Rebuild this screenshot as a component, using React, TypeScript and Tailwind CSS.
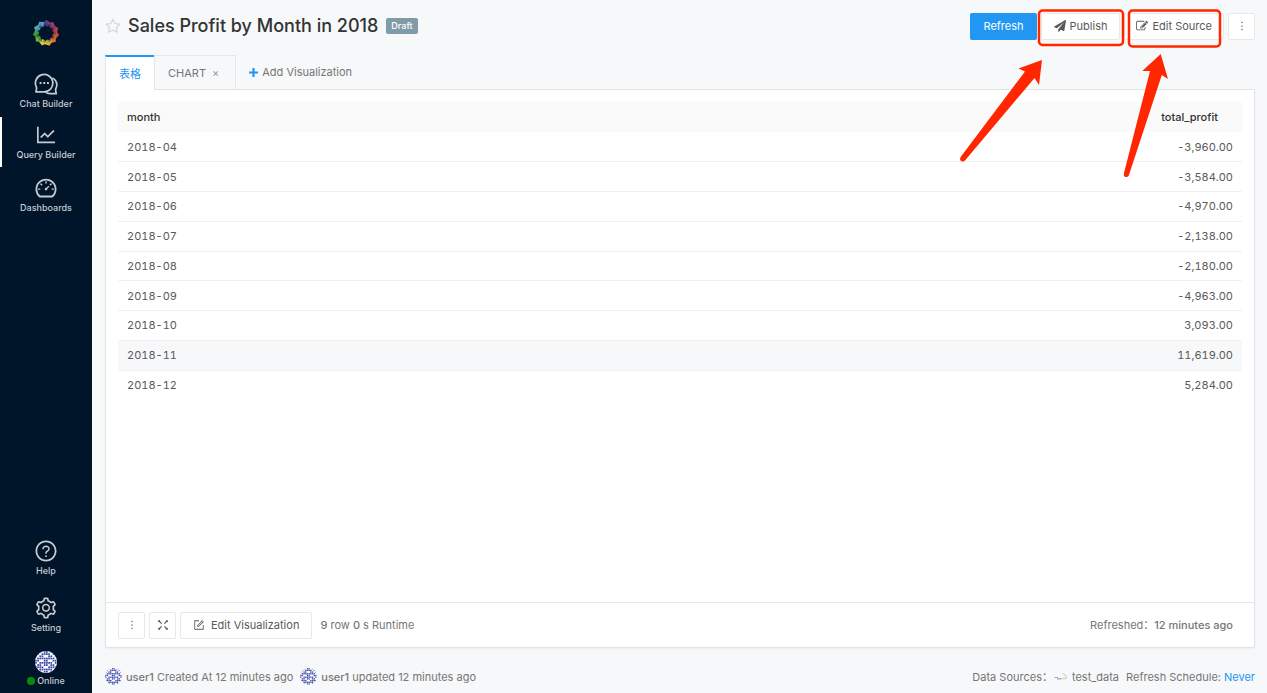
import React from "react";
import {
  AiOutlineDashboard,
  AiOutlineForm,
  AiOutlineLineChart,
  AiOutlineQuestionCircle,
  AiOutlineSetting,
} from "react-icons/ai";

const rows = [
  { month: "2018-04", profit: "-3,960.00" },
  { month: "2018-05", profit: "-3,584.00" },
  { month: "2018-06", profit: "-4,970.00" },
  { month: "2018-07", profit: "-2,138.00" },
  { month: "2018-08", profit: "-2,180.00" },
  { month: "2018-09", profit: "-4,963.00" },
  { month: "2018-10", profit: "3,093.00" },
  { month: "2018-11", profit: "11,619.00", active: true },
  { month: "2018-12", profit: "5,284.00" },
];

const petals = [
  "#5a4a95", "#94467f", "#c5405f", "#e8503f", "#ee7a35",
  "#f3c040", "#e6e44a", "#7cbc3c", "#3fa83c", "#5cc0b0", "#5fa5dc",
];

function Logo() {
  return (
    <svg viewBox="-14 -14 28 28" className="size-7" aria-hidden="true">
      {petals.map((color, i) => (
        <g key={color} transform={`rotate(${(i * 360) / petals.length})`}>
          <path d="M0.200 -13.200 L4.300 -10.400 L1.400 -6.600 L-4.600 -8.600 Z" fill={color} fillOpacity="0.9" />
          <path d="M-4.600 -8.600 L-0.500 -10 L1.400 -6.600 Z" fill="#001529" fillOpacity="0.35" />
        </g>
      ))}
    </svg>
  );
}

function ChatIcon() {
  return (
    <svg viewBox="0 0 24 22" className="h-[22px] w-6" fill="none" stroke="currentColor" strokeWidth="1.7" strokeLinejoin="round" aria-hidden="true">
      <path d="M1.900 18.800H10.200a8.700 8.700 0 1 0-7.800-4.700c.5 1.400 0 2.900-.5 4.700Z" />
      <path d="M18.500 5c3 1.500 4.300 4.200 4.300 7 0 1.500-.4 2.800-1.100 4-.3 1.500.2 3 .6 4.700H16c-2 0-3.600-.8-4.700-2" />
      <path d="M5.600 10h1.900M9.300 10h1.900M13 10h1.900" strokeWidth="1.900" />
    </svg>
  );
}

function Identicon({ className }: { className: string }) {
  const pattern = ["0110110110", "1101111011", "1011001101", "0111111110", "1100110011", "1011111101", "0110110110", "1111001111", "1011111101", "0110110110"];
  return (
    <svg viewBox="0 0 20 20" className={className + " rounded-full bg-white"} aria-hidden="true">
      {pattern.flatMap((line, y) =>
        line.split("").map((cell, x) =>
          cell === "1" ? <rect key={`${x}-${y}`} x={x * 2} y={y * 2} width="1.6" height="1.6" fill="#3d4aa8" /> : null,
        ),
      )}
    </svg>
  );
}

function PaperPlane() {
  return (
    <svg viewBox="0 0 1792 1792" className="size-3" fill="currentColor" aria-hidden="true">
      <path d="M1764 11q33 24 27 64l-256 1536q-5 29-32 45-14 8-31 8-11 0-24-5l-453-185-242 295q-18 23-49 23-13 0-22-4-19-7-30.500-23.500t-11.500-36.500v-349l864-1059-1069 925-395-162q-37-14-40-55-2-40 32-59l1664-960q15-9 32-9 20 0 36 11z" />
    </svg>
  );
}

function PencilSquare() {
  return (
    <svg viewBox="0 0 1792 1792" className="size-3" fill="currentColor" aria-hidden="true">
      <path d="M888 1184l116-116-152-152-116 116v56h96v96h56zm440-720q-16-16-33 1l-350 350q-17 17-1 33t33-1l350-350q17-17 1-33zm80 594v190q0 119-84.500 203.500t-203.500 84.500h-832q-119 0-203.500-84.500t-84.500-203.500v-832q0-119 84.500-203.500t203.500-84.500h832q63 0 117 25 15 7 18 23 3 17-9 29l-49 49q-14 14-32 8-23-6-45-6h-832q-66 0-113 47t-47 113v832q0 66 47 113t113 47h832q66 0 113-47t47-113v-126q0-13 9-22l64-64q15-15 35-7t20 29zm-96-738l288 288-672 672h-288v-288zm444 132l-92 92-288-288 92-92q28-28 68-28t68 28l152 152q28 28 28 68t-28 68z" />
    </svg>
  );
}

function Dots() {
  return (
    <svg viewBox="0 0 12 12" className="size-3" fill="currentColor" aria-hidden="true">
      <circle cx="6" cy="2.500" r="0.7" />
      <circle cx="6" cy="6" r="0.7" />
      <circle cx="6" cy="9.500" r="0.7" />
    </svg>
  );
}

function ExpandIcon() {
  return (
    <svg viewBox="0 0 12 12" className="size-3" stroke="currentColor" fill="currentColor" strokeWidth="1.200" aria-hidden="true">
      <path d="M2 2l2.600 2.600M10 2L7.400 4.600M2 10l2.600-2.600M10 10L7.400 7.400" />
      <path d="M1.200 1.200h2.300L1.200 3.500zM10.800 1.200v2.300L8.500 1.200zM1.200 10.800V8.500l2.300 2.300zM10.800 10.800H8.500l2.300-2.300z" stroke="none" />
    </svg>
  );
}

function StarIcon() {
  return (
    <svg viewBox="0 0 16 16" className="size-4" fill="none" stroke="#d4d6d8" strokeWidth="1.200" strokeLinejoin="round" aria-hidden="true">
      <path d="M8 1.200l2.100 4.400 4.800.6-3.500 3.300.9 4.800L8 12l-4.300 2.300.9-4.800L1.100 6.200l4.800-.6z" />
    </svg>
  );
}

function DatabaseIcon() {
  return (
    <svg viewBox="0 0 14 10" className="ml-px h-[10px] w-[14px]" fill="none" aria-hidden="true">
      <path d="M.5 5.500h3.500M3 6.800h4" stroke="#7fadc5" strokeWidth="1.200" />
      <path d="M8.500 1.500c1.800.2 2.500 1 3 2.500l1.500 2" stroke="#a9cbdc" strokeWidth="1" />
      <path d="M7 6.500h5.500" stroke="#f3cfa0" strokeWidth="1.500" />
    </svg>
  );
}

function NavItem({ icon, label, active, className }: { icon: React.ReactNode; label: string; active?: boolean; className: string }) {
  return (
    <a
      href="#"
      aria-current={active ? "page" : undefined}
      className={`flex w-full flex-col items-center border-l-2 pr-0.5 text-[9px] font-medium leading-3 text-[#c5cbd1] ${active ? "border-white" : "border-transparent"} ${className}`}
    >
      {icon}
      <span>{label}</span>
    </a>
  );
}

const plainButton = "flex h-[27px] items-center justify-center rounded-[2px] border border-[#e8e8e8] bg-white text-[#595959]";

export default function App() {
  return (
    <div className="relative flex min-h-screen bg-[#f6f8f9] font-['Inter','Noto_Sans_CJK_SC',sans-serif] text-[11px] leading-4 text-[#767676]">
      <nav className="flex w-[92px] shrink-0 flex-col bg-[#001529]">
        <a href="#" aria-label="Home" className="flex justify-center pt-[19px] pb-5">
          <Logo />
        </a>
        <NavItem className="gap-[3px] pt-[6px] pb-[7px]" icon={<ChatIcon />} label="Chat Builder" />
        <NavItem className="gap-[2px] py-[6px]" active icon={<AiOutlineLineChart className="size-6" />} label="Query Builder" />
        <NavItem className="gap-[2px] py-[9px]" icon={<AiOutlineDashboard className="size-6" />} label="Dashboards" />
        <div className="mt-auto pb-[6px]">
          <NavItem className="gap-[2px] pb-[19px]" icon={<AiOutlineQuestionCircle className="size-6" />} label="Help" />
          <NavItem className="gap-[2px] pb-[17px]" icon={<AiOutlineSetting className="size-6" />} label="Setting" />
          <a href="#" className="flex flex-col items-center gap-[2px] text-[9px] font-medium leading-3 text-[#c5cbd1]">
            <Identicon className="size-[22px]" />
            <span className="flex items-center gap-0.5">
              <span className="size-2 rounded-full bg-[#0a8a0a]" />
              Online
            </span>
          </a>
        </div>
      </nav>

      <main className="flex min-w-0 flex-1 flex-col pr-3 pl-[13px]">
        <header className="flex items-center pt-3">
          <button type="button" aria-label="Favorite" className="mr-[7px]">
            <StarIcon />
          </button>
          <h1 className="text-[18px] font-medium leading-7 text-[#323232]">Sales Profit by Month in 2018</h1>
          <span className="ml-2 rounded-[2px] bg-[#7f9ba6] px-[5px] text-[9px] font-medium leading-4 text-white">Draft</span>
          <div className="ml-auto flex items-center gap-1">
            <button type="button" className="h-[27px] rounded-[2px] bg-[#2196f3] px-[13px] text-white">Refresh</button>
            <button type="button" className={plainButton + " gap-1 px-3"}>
              <PaperPlane />
              Publish
            </button>
            <button type="button" className={plainButton + " gap-1 px-[11px]"}>
              <PencilSquare />
              Edit Source
            </button>
            <button type="button" aria-label="More" className={plainButton + " w-[27px]"}>
              <Dots />
            </button>
          </div>
        </header>

        <div role="tablist" className="mt-[15px] flex h-[34px] items-stretch">
          <button type="button" role="tab" aria-selected="true" className="relative z-10 -mb-px border-t-2 border-l border-l-[#e4e6e8] border-t-[#2196f3] bg-white px-[13px] text-[#2196f3]">表格</button>
          <button type="button" role="tab" aria-selected="false" className="flex items-center gap-[6px] border border-b-0 border-[#e4e6e8] pr-4 pl-[13px]">
            CHART <span className="text-[#999]">×</span>
          </button>
          <button type="button" className="ml-[13px] flex items-center gap-1">
            <svg viewBox="0 0 9 9" className="size-[9px]" aria-hidden="true">
              <path d="M4.500 0v9M0 4.500h9" stroke="#2196f3" strokeWidth="2.200" />
            </svg>
            Add Visualization
          </button>
        </div>

        <section className="flex flex-1 flex-col rounded-b-[3px] border border-[#e0e3e5] bg-white shadow-xs">
          <div className="flex-1 px-3 pt-3">
            <table className="h-[298px] w-full border-collapse tabular-nums">
              <thead>
                <tr className="h-[30px] bg-[#fafafa] text-[#333]">
                  <th className="px-[9px] text-left font-medium">month</th>
                  <th className="pr-6 text-right font-medium">total_profit</th>
                </tr>
              </thead>
              <tbody>
                {rows.map((row) => (
                  <tr key={row.month} className={`h-[29px] border-b border-[#f0f0f0] text-[#595959] last:border-b-0 ${row.active ? "bg-[#f7f8f9]" : ""}`}>
                    <td className="px-[9px]">{row.month}</td>
                    <td className="px-[9px] text-right">{row.profit}</td>
                  </tr>
                ))}
              </tbody>
            </table>
          </div>
          <div className="flex h-[45px] items-center border-t border-[#e4e6e8] px-3">
            <button type="button" aria-label="More" className={plainButton + " w-[27px]"}>
              <Dots />
            </button>
            <button type="button" aria-label="Fullscreen" className={plainButton + " ml-1 w-[27px]"}>
              <ExpandIcon />
            </button>
            <button type="button" className={plainButton + " ml-1 gap-[6px] px-3"}>
              <AiOutlineForm className="size-3" />
              Edit Visualization
            </button>
            <p className="ml-2">
              <span className="font-medium">9</span> row <span className="font-medium">0</span> s Runtime
            </p>
            <p className="mr-[9px] ml-auto">
              Refreshed：<strong className="font-medium">12 minutes ago</strong>
            </p>
          </div>
        </section>

        <footer className="flex h-[45px] items-center pt-3">
          <Identicon className="mr-1 size-[17px]" />
          <span><strong className="font-medium">user1</strong> Created At 12 minutes ago</span>
          <Identicon className="mr-1 ml-[7px] size-[17px]" />
          <span><strong className="font-medium">user1</strong> updated 12 minutes ago</span>
          <span className="ml-auto">Data Sources：</span>
          <DatabaseIcon />
          <span className="ml-1">test_data</span>
          <span className="ml-[7px]">Refresh Schedule:</span>
          <a href="#" className="ml-[3px] text-[#2196f3]">Never</a>
        </footer>
      </main>

      <svg viewBox="960 0 307 180" className="pointer-events-none absolute top-0 right-0 h-[180px] w-[307px]" aria-hidden="true">
        <g fill="none" stroke="#ff2600" strokeWidth="2.500">
          <rect x="1039" y="10.500" width="84" height="34.500" rx="3.500" />
          <rect x="1129" y="10.500" width="91" height="36" rx="3.500" />
        </g>
        <g fill="#ff2600">
          <path d="M1042 60L1039 85L1034.500 78L965 160.500Q962.500 162.500 960.500 160.500Q959.500 158.500 961 156.500L1025 71.500L1018.500 68.500Z" />
          <path d="M1160.700 54L1168 79L1161.800 75L1128.800 175.500Q1127 178 1124.500 176.500Q1123.500 175.500 1124 173L1150 71L1142.300 71Z" />
        </g>
      </svg>
    </div>
  );
}
